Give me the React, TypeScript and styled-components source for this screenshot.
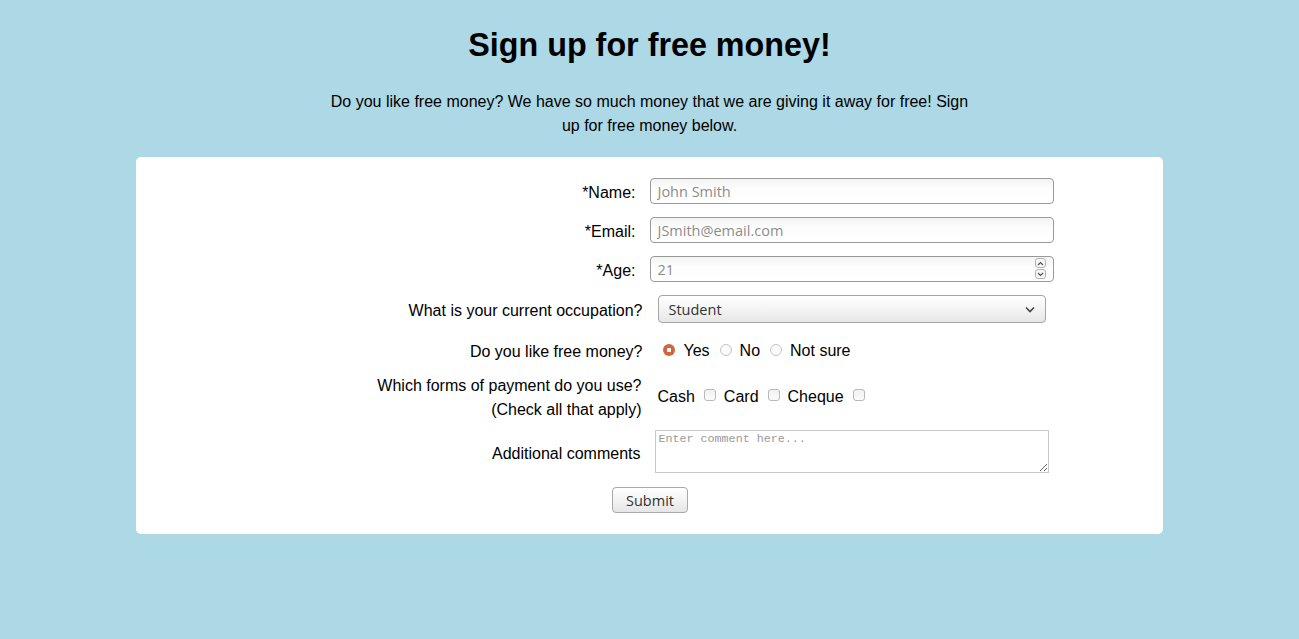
import React from "react";
import styled, { createGlobalStyle } from "styled-components";

const Global = createGlobalStyle`
  html, body { background: #add8e6; }
  body {
    margin: 8px;
    font-family: "Liberation Sans", Arial, sans-serif;
    font-size: 16px;
    color: #000;
  }
`;

const Title = styled.h1`
  margin: 17px 0 0;
  text-align: center;
  font-size: 32.3px;
  font-weight: bold;
  line-height: 40px;
`;

const Intro = styled.p`
  width: 50%;
  margin: 25px auto 19px;
  text-align: center;
  line-height: 24px;
`;

const Card = styled.form`
  width: 80%;
  margin: 0 auto;
  background: #fff;
  border-radius: 5px;
  padding: 21px 0;
  display: flex;
  flex-direction: column;
`;

const Row = styled.div<{ $mb: number }>`
  display: grid;
  grid-template-columns: 1fr 1fr;
  align-items: center;
  margin-bottom: ${(p) => p.$mb}px;
`;

const Label = styled.label<{ $pr: number }>`
  text-align: right;
  padding-right: ${(p) => p.$pr}px;
  line-height: 24px;
  position: relative;
  top: 2px;
`;

const Control = styled.div<{ $ml: number }>`
  padding-left: ${(p) => p.$ml}px;
  display: flex;
  align-items: center;
`;

const InputWrap = styled.div`
  position: relative;
  display: flex;
`;

const TextInput = styled.input`
  box-sizing: border-box;
  width: 404px;
  height: 26px;
  border: 1px solid #9a9a9a;
  border-radius: 4px;
  background: linear-gradient(#f3f3f3, #fdfdfd 40%, #fff);
  padding: 0 6px;
  font-family: "Open Sans", "DejaVu Sans", sans-serif;
  font-size: 14.5px;
  color: #333;
  outline: none;
  &::placeholder { color: #8c8c8c; }
`;

const Spinner = styled.div`
  position: absolute;
  right: 8px;
  top: 2px;
  display: flex;
  flex-direction: column;
  gap: 1px;
`;

const SpinBtn = styled.div`
  width: 11px;
  height: 10px;
  box-sizing: border-box;
  border: 1px solid #b4b4b4;
  border-radius: 3px;
  background: #f6f6f6;
  display: flex;
  align-items: center;
  justify-content: center;
`;

const SelectBox = styled.div`
  box-sizing: border-box;
  width: 388px;
  height: 28px;
  border: 1px solid #a5a5a5;
  border-radius: 4px;
  background: linear-gradient(#ffffff, #f4f4f4 50%, #e6e6e6);
  display: flex;
  align-items: center;
  justify-content: space-between;
  padding: 0 10px 0 9px;
  font-family: "Open Sans", "DejaVu Sans", sans-serif;
  font-size: 14.5px;
  color: #333;
`;

const Radio = styled.span<{ $on?: boolean }>`
  box-sizing: border-box;
  width: 12px;
  height: 12px;
  border-radius: 50%;
  margin: 0 8px 0 0;
  border: ${(p) => (p.$on ? "none" : "1px solid #c4c4c4")};
  background: ${(p) =>
    p.$on ? "radial-gradient(circle, #fff 0 2px, #d0653f 2.5px)" : "#fafafa"};
  flex: none;
`;

const Opt = styled.span<{ $mr: number }>`
  margin-right: ${(p) => p.$mr}px;
  line-height: 24px;
  position: relative;
  top: 1px;
`;

const Check = styled.span`
  box-sizing: border-box;
  width: 12px;
  height: 12px;
  border: 1px solid #b9b9b9;
  border-radius: 3px;
  background: linear-gradient(#f2f2f2, #fafafa);
  margin: 0 8px 0 9px;
  flex: none;
  position: relative;
  top: -1px;
`;

const TextArea = styled.textarea`
  box-sizing: border-box;
  width: 394px;
  height: 43px;
  border: 1px solid #c9c9c9;
  padding: 1px 2px;
  font-family: "Liberation Mono", monospace;
  font-size: 11.7px;
  resize: both;
  outline: none;
  &::placeholder { color: #9a9a9a; }
`;

const Submit = styled.button`
  align-self: center;
  width: 76px;
  height: 26px;
  margin-left: 1px;
  border: 1px solid #a8a8a8;
  border-radius: 4px;
  background: linear-gradient(#ffffff, #f3f3f3 50%, #e6e6e6);
  font-family: "Open Sans", "DejaVu Sans", sans-serif;
  font-size: 14.5px;
  color: #333;
  padding: 0;
`;

const Chevron = ({ up }: { up?: boolean }) => (
  <svg width="7" height="5" viewBox="0 0 7 5">
    <path
      d={up ? "M1 4 L3.5 1.5 L6 4" : "M1 1 L3.5 3.5 L6 1"}
      fill="none"
      stroke="#555"
      strokeWidth="1.2"
    />
  </svg>
);

export default function App() {
  return (
    <>
      <Global />
      <Title>Sign up for free money!</Title>
      <Intro>
        Do you like free money? We have so much money that we are giving it away for free! Sign up
        for free money below.
      </Intro>
      <Card onSubmit={(e) => e.preventDefault()}>
        <Row $mb={13}>
          <Label $pr={14}>*Name:</Label>
          <Control $ml={1}>
            <TextInput placeholder="John Smith" />
          </Control>
        </Row>
        <Row $mb={13}>
          <Label $pr={14}>*Email:</Label>
          <Control $ml={1}>
            <TextInput placeholder="JSmith@email.com" />
          </Control>
        </Row>
        <Row $mb={13}>
          <Label $pr={14}>*Age:</Label>
          <Control $ml={1}>
            <InputWrap>
              <TextInput placeholder="21" />
              <Spinner>
                <SpinBtn>
                  <Chevron up />
                </SpinBtn>
                <SpinBtn>
                  <Chevron />
                </SpinBtn>
              </Spinner>
            </InputWrap>
          </Control>
        </Row>
        <Row $mb={15}>
          <Label $pr={7}>What is your current occupation?</Label>
          <Control $ml={9}>
            <SelectBox>
              <span>Student</span>
              <svg width="10" height="7" viewBox="0 0 10 7">
                <path d="M1 1.5 L5 5.5 L9 1.5" fill="none" stroke="#444" strokeWidth="1.6" />
              </svg>
            </SelectBox>
          </Control>
        </Row>
        <Row $mb={10}>
          <Label $pr={7}>Do you like free money?</Label>
          <Control $ml={14}>
            <Radio $on />
            <Opt $mr={10}>Yes</Opt>
            <Radio />
            <Opt $mr={10}>No</Opt>
            <Radio />
            <Opt $mr={0}>Not sure</Opt>
          </Control>
        </Row>
        <Row $mb={10}>
          <Label $pr={8}>
            Which forms of payment do you use?
            <br />
            (Check all that apply)
          </Label>
          <Control $ml={8}>
            <Opt $mr={0}>Cash</Opt>
            <Check />
            <Opt $mr={0}>Card</Opt>
            <Check />
            <Opt $mr={0}>Cheque</Opt>
            <Check />
          </Control>
        </Row>
        <Row $mb={14}>
          <Label $pr={9}>Additional comments</Label>
          <Control $ml={6}>
            <TextArea placeholder="Enter comment here..." />
          </Control>
        </Row>
        <Submit type="submit">Submit</Submit>
      </Card>
    </>
  );
}
